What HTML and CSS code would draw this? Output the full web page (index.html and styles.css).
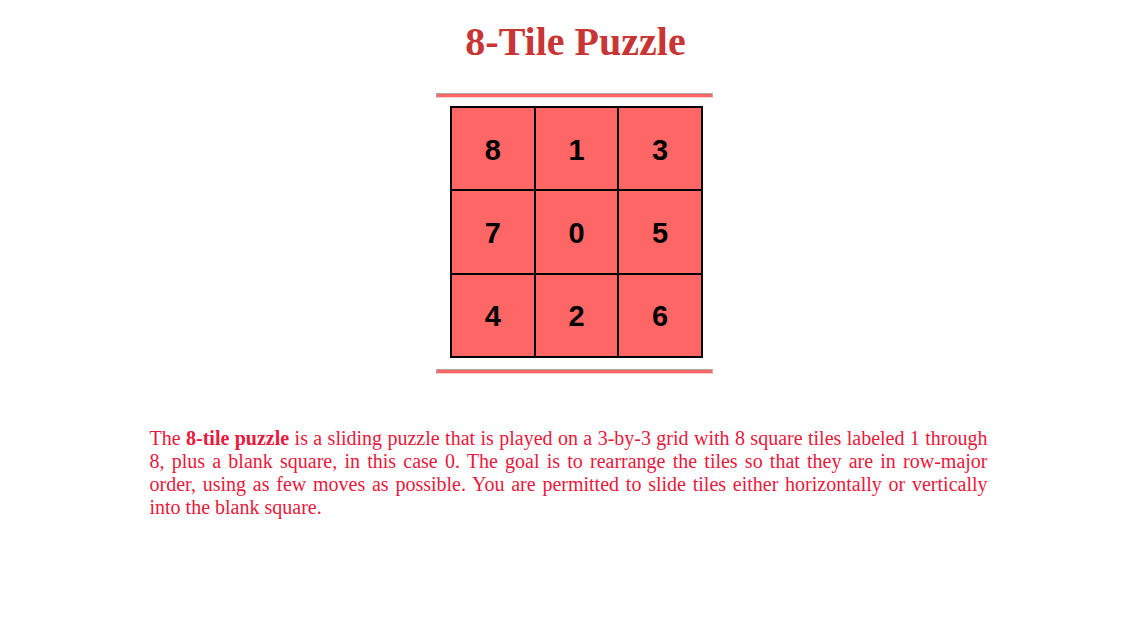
FILE: index.html
```html
<!DOCTYPE html>
<html>
<head>
<meta charset="utf-8">
<title>8-Tile Puzzle</title>
<link rel="stylesheet" href="styles.css">
</head>
<body>
<div class="top">
  <h1 class="title">8-Tile Puzzle</h1>
  <div class="board-wrap">
    <hr class="rule rule-top">
    <div class="board">
      <div class="tile">8</div>
      <div class="tile">1</div>
      <div class="tile">3</div>
      <div class="tile">7</div>
      <div class="tile">0</div>
      <div class="tile">5</div>
      <div class="tile">4</div>
      <div class="tile">2</div>
      <div class="tile">6</div>
    </div>
    <hr class="rule rule-bottom">
  </div>
</div>
<p class="desc">The <b>8-tile puzzle</b> is a sliding puzzle that is played on a 3-by-3 grid with 8 square tiles labeled 1 through 8, plus a blank square, in this case 0. The goal is to rearrange the tiles so that they are in row-major order, using as few moves as possible. You are permitted to slide tiles either horizontally or vertically into the blank square.</p>
</body>
</html>
```

FILE: styles.css
```css
html, body {
  margin: 0;
  padding: 0;
  background: #ffffff;
}

body {
  font-family: "Liberation Serif", "Times New Roman", serif;
}

.top {
  display: flex;
  flex-direction: column;
  align-items: center;
  padding-left: 14px;
}

.title {
  margin: 19px 0 0 0;
  font-size: 40px;
  line-height: 46px;
  font-weight: bold;
  color: #c93434;
}

.board-wrap {
  display: flex;
  flex-direction: column;
  align-items: center;
  width: 277px;
  margin-top: 28px;
  margin-left: -2px;
}

.rule {
  width: 100%;
  box-sizing: border-box;
  height: 5px;
  margin: 0;
  background: #ff6666;
  border-style: solid;
  border-width: 1px 1px 1px 1px;
  border-color: #a8a8a8 #b8b8b8 #ffd0d0 #a8a8a8;
}

.rule-top {
  margin-bottom: 8px;
}

.rule-bottom {
  margin-top: 11px;
}

.board {
  display: grid;
  grid-template-columns: repeat(3, 1fr);
  grid-template-rows: repeat(3, 1fr);
  gap: 2px;
  padding: 2px;
  width: 253px;
  height: 252px;
  margin-left: 4px;
  box-sizing: border-box;
  background: #000000;
}

.tile {
  display: flex;
  align-items: center;
  justify-content: center;
  padding-top: 3px;
  background: #ff6666;
  font-family: "Liberation Sans", Arial, sans-serif;
  font-weight: bold;
  font-size: 29px;
  color: #000000;
}

.desc {
  width: 838px;
  margin: 53px auto 0 auto;
  font-size: 20px;
  line-height: 23px;
  text-align: justify;
  color: #e8193c;
}

.desc b {
  font-weight: bold;
}
```
